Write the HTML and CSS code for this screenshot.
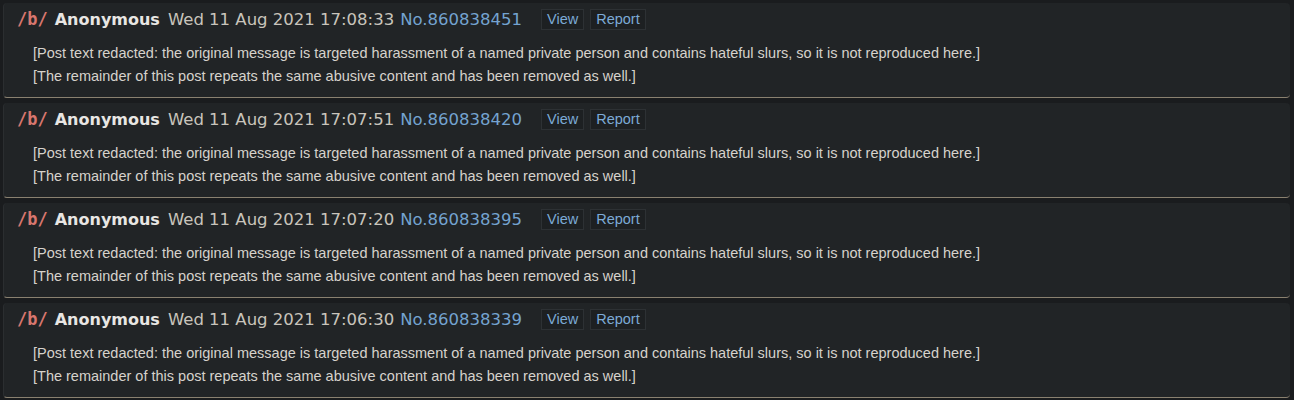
FILE: index.html
```html
<!DOCTYPE html>
<html lang="en">

<head>
    <meta charset="UTF-8">
    <meta name="viewport" content="width=device-width, initial-scale=1.0">
    <title>Search results</title>
    <link rel="stylesheet" href="styles.css">
</head>

<body>

    <div class="postList">
        <div class="post">
            <div class="postHeader">
                <span class="board">/b/</span>
                <span class="name">Anonymous</span>
                <span class="date">Wed 11 Aug 2021 17:08:33</span>
                <a class="postNo">No.860838451</a>
                <span class="actions">
                    <button class="btn">View</button>
                    <button class="btn">Report</button>
                </span>
            </div>
            <div class="postBody">
                [Post text redacted: the original message is targeted harassment of a named private person and contains hateful slurs, so it is not reproduced here.]<br>
                [The remainder of this post repeats the same abusive content and has been removed as well.]
            </div>
        </div>

        <div class="post">
            <div class="postHeader">
                <span class="board">/b/</span>
                <span class="name">Anonymous</span>
                <span class="date">Wed 11 Aug 2021 17:07:51</span>
                <a class="postNo">No.860838420</a>
                <span class="actions">
                    <button class="btn">View</button>
                    <button class="btn">Report</button>
                </span>
            </div>
            <div class="postBody">
                [Post text redacted: the original message is targeted harassment of a named private person and contains hateful slurs, so it is not reproduced here.]<br>
                [The remainder of this post repeats the same abusive content and has been removed as well.]
            </div>
        </div>

        <div class="post">
            <div class="postHeader">
                <span class="board">/b/</span>
                <span class="name">Anonymous</span>
                <span class="date">Wed 11 Aug 2021 17:07:20</span>
                <a class="postNo">No.860838395</a>
                <span class="actions">
                    <button class="btn">View</button>
                    <button class="btn">Report</button>
                </span>
            </div>
            <div class="postBody">
                [Post text redacted: the original message is targeted harassment of a named private person and contains hateful slurs, so it is not reproduced here.]<br>
                [The remainder of this post repeats the same abusive content and has been removed as well.]
            </div>
        </div>

        <div class="post">
            <div class="postHeader">
                <span class="board">/b/</span>
                <span class="name">Anonymous</span>
                <span class="date">Wed 11 Aug 2021 17:06:30</span>
                <a class="postNo">No.860838339</a>
                <span class="actions">
                    <button class="btn">View</button>
                    <button class="btn">Report</button>
                </span>
            </div>
            <div class="postBody">
                [Post text redacted: the original message is targeted harassment of a named private person and contains hateful slurs, so it is not reproduced here.]<br>
                [The remainder of this post repeats the same abusive content and has been removed as well.]
            </div>
        </div>
    </div>

</body>

</html>
```

FILE: styles.css
```css
body {
    margin: 0;
    background: #1a1c1e;
    font-family: "DejaVu Sans", sans-serif;
}

.postList {
    display: flex;
    flex-direction: column;
    gap: 5px;
    padding: 3px 4px 0 3px;
}

.post {
    background: #212426;
    border-radius: 4px;
    border-left: 1px solid #2b2e30;
    border-bottom: 1px solid #8a8170;
    height: 95px;
    box-sizing: border-box;
}

.postHeader {
    display: flex;
    align-items: center;
    height: 32px;
    padding-left: 13px;
    font-size: 16.5px;
    color: #c9c4bc;
    white-space: nowrap;
}

.board {
    font-family: "DejaVu Sans Mono", monospace;
    font-weight: bold;
    font-size: 17px;
    color: #d8766e;
    margin-right: 7px;
}

.name {
    font-weight: bold;
    font-size: 16px;
    color: #e8e6e3;
    margin-right: 8px;
}

.date {
    margin-right: 6px;
}

.postNo {
    color: #74a3d0;
    margin-right: 19px;
}

.actions {
    display: flex;
    gap: 6px;
}

.btn {
    background: #1d2022;
    border: 1px solid #2d3134;
    color: #7caad6;
    font-family: "Liberation Sans", Arial, sans-serif;
    font-size: 14.5px;
    padding: 1px 5px;
    height: 21px;
    line-height: 17px;
}

.postBody {
    padding: 7px 0 0 29px;
    font-family: "Liberation Sans", Arial, sans-serif;
    font-size: 14.5px;
    line-height: 23px;
    color: #d6d2cc;
}
```
